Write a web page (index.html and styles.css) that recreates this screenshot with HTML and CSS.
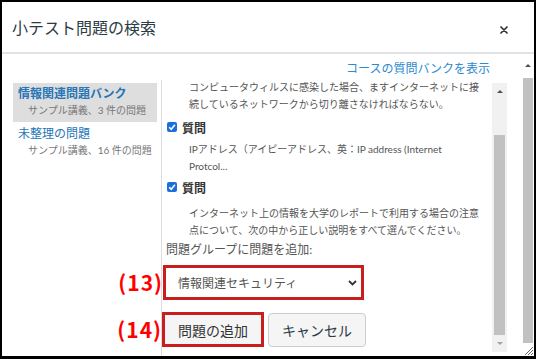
FILE: index.html
```html
<!DOCTYPE html>
<html lang="ja">
<head>
<meta charset="utf-8">
<title>小テスト問題の検索</title>
<link rel="stylesheet" href="styles.css">
</head>
<body>
<div class="frame">
  <div class="header">
    <div class="title">小テスト問題の検索</div>
    <svg class="close" width="8" height="8" viewBox="0 0 8 8"><path d="M1 1 L7 7 M7 1 L1 7" stroke="#333" stroke-width="1.7" stroke-linecap="round"/></svg>
  </div>
  <div class="body">
    <div class="content">
      <div class="linkrow">コースの質問バンクを表示</div>
      <div class="panes">
        <div class="sidebar">
          <div class="item sel">
            <div class="item-title">情報関連問題バンク</div>
            <div class="item-sub">サンプル講義、3 件の問題</div>
          </div>
          <div class="item second">
            <div class="item-title">未整理の問題</div>
            <div class="item-sub">サンプル講義、16 件の問題</div>
          </div>
        </div>
        <div class="main">
          <div class="desc d1">コンピュータウィルスに感染した場合、ますインターネットに接<br>続しているネットワークから切り離さなければならない。</div>
          <div class="q q1"><span class="cb"><svg width="10" height="10" viewBox="0 0 10 10"><path d="M2.2 5.2 L4.2 7.2 L7.9 2.8" fill="none" stroke="#fff" stroke-width="1.6"/></svg></span>質問</div>
          <div class="desc d2">IPアドレス（アイピーアドレス、英：IP address (Internet<br>Protcol...</div>
          <div class="q q2"><span class="cb"><svg width="10" height="10" viewBox="0 0 10 10"><path d="M2.2 5.2 L4.2 7.2 L7.9 2.8" fill="none" stroke="#fff" stroke-width="1.6"/></svg></span>質問</div>
          <div class="desc d3">インターネット上の情報を大学のレポートで利用する場合の注意<br>点について、次の中から正しい説明をすべて選んでください。</div>
          <div class="label">問題グループに問題を追加:</div>
          <div class="select">
            <span class="ann">(13)</span>
            <span>情報関連セキュリティ</span>
            <svg class="chev" width="9" height="6" viewBox="0 0 9 6"><path d="M1 1 L4.5 4.5 L8 1" fill="none" stroke="#333" stroke-width="1.8"/></svg>
          </div>
          <div class="btns">
            <div class="add"><span class="ann">(14)</span>問題の追加</div>
            <div class="cancel">キャンセル</div>
          </div>
        </div>
        <div class="iscroll">
          <div class="arrow"><span class="tri up"></span></div>
          <div class="ithumb"></div>
          <div class="arrow"><span class="tri down"></span></div>
        </div>
        <div class="gap"></div>
      </div>
    </div>
    <div class="oscroll">
      <div class="oarrow"><span class="tri up dark"></span></div>
      <div class="othumb"></div>
      <svg class="grip" width="10" height="9" viewBox="0 0 10 9"><path d="M2 9 L10 1 M5 9 L10 4 M8 9 L10 7" stroke="#666" stroke-width="1"/></svg>
    </div>
  </div>
</div>
</body>
</html>
```

FILE: styles.css
```css
* { box-sizing: border-box; margin: 0; padding: 0; }
body {
  width: 536px;
  height: 359px;
  overflow: hidden;
  background: #fff;
  font-family: Lato, "Noto Sans CJK JP", sans-serif;
}
.frame {
  width: 536px;
  height: 359px;
  border: 2px solid #000;
  border-bottom-width: 3px;
  display: flex;
  flex-direction: column;
}
.header {
  height: 52px;
  flex: none;
  border-bottom: 2px solid #e1e4e7;
  display: flex;
  align-items: center;
  justify-content: space-between;
  padding: 0 26px 0 10px;
}
.title {
  font-family: "Noto Sans CJK JP", sans-serif;
  font-size: 16px;
  color: #2d3b45;
}
.close { margin-top: 6px; }
.body { flex: 1; display: flex; min-height: 0; }
.content { flex: 1; display: flex; flex-direction: column; min-width: 0; }
.linkrow {
  height: 26px;
  flex: none;
  display: flex;
  align-items: center;
  justify-content: flex-end;
  padding-right: 32px;
  font-family: "Noto Sans CJK JP", sans-serif;
  font-size: 12px;
  color: #2b8ad0;
}
.panes { flex: 1; display: flex; min-height: 0; }
.sidebar {
  width: 160px;
  flex: none;
  border-right: 1px solid #dcdcdc;
  padding-top: 3px;
}
.item {
  margin-left: 11px;
  width: 144px;
  padding: 2px 0 4px 5px;
}
.item.second { padding-top: 3px; }
.item.sel { background: #dedede; }
.item-title {
  font-size: 12px;
  line-height: 17px;
  color: #2575b8;
}
.item.sel .item-title { font-weight: 700; }
.item-sub {
  font-size: 10px;
  line-height: 16px;
  color: #777;
  padding-left: 10px;
}
.main {
  flex: 1;
  min-width: 0;
  padding-left: 5px;
}
.desc {
  padding-left: 22px;
  font-size: 10px;
  line-height: 17px;
  color: #555;
  white-space: nowrap;
}
.d1 { margin-top: -1px; }
.d2 { margin-top: 4px; }
.d3 { margin-top: 8px; }
.q {
  display: flex;
  align-items: center;
  height: 20px;
  font-family: "Noto Sans CJK JP", sans-serif;
  font-size: 12px;
  font-weight: 700;
  color: #333;
}
.q1 { margin-top: 4px; }
.q2 { margin-top: 2px; }
.cb {
  width: 10px;
  height: 10px;
  background: #1a6fdc;
  border-radius: 2px;
  margin-right: 5px;
  display: flex;
}
.label {
  margin-top: 2px;
  margin-left: -1px;
  font-size: 12px;
  line-height: 18px;
  color: #555;
}
.select {
  position: relative;
  margin-top: 6px;
  margin-left: -4px;
  width: 201px;
  height: 35px;
  border: 3px solid #c81e1e;
  background: #fff;
  display: flex;
  align-items: center;
  justify-content: space-between;
  padding: 0 4px 0 12px;
  font-size: 12px;
  color: #555;
}
.ann {
  position: absolute;
  right: calc(100% + 3px);
  top: 50%;
  transform: translateY(-52%);
  font-family: "Noto Sans CJK JP", sans-serif;
  font-size: 21px;
  font-weight: 700;
  color: #ff0000;
  letter-spacing: 1px;
  white-space: nowrap;
  line-height: 1;
}
.btns {
  display: flex;
  gap: 4px;
  margin-top: 12px;
  margin-left: -5px;
}
.add {
  position: relative;
  width: 102px;
  height: 35px;
  border: 3px solid #c81e1e;
  background: #f5f5f5;
  display: flex;
  align-items: center;
  justify-content: center;
  font-size: 14px;
  color: #333;
}
.cancel {
  width: 98px;
  height: 34px;
  margin-top: 1px;
  border: 1px solid #c7cdd1;
  border-radius: 4px;
  background: #f5f5f5;
  display: flex;
  align-items: center;
  justify-content: center;
  font-size: 14px;
  color: #2d3b45;
}
.iscroll {
  width: 15px;
  flex: none;
  margin: 3px 0 4px;
  background: #f1f1f1;
  display: flex;
  flex-direction: column;
  align-items: center;
}
.arrow {
  height: 17px;
  width: 15px;
  display: flex;
  align-items: center;
  justify-content: center;
}
.ithumb {
  margin-top: 35px;
  width: 11px;
  height: 200px;
  background: #c1c1c1;
}
.gap { width: 15px; flex: none; }
.tri { width: 0; height: 0; border-left: 3px solid transparent; border-right: 3px solid transparent; }
.tri.up { border-bottom: 3px solid #505050; }
.tri.down { border-top: 3px solid #a3a3a3; }
.oscroll {
  width: 12px;
  flex: none;
  position: relative;
  display: flex;
  flex-direction: column;
  align-items: center;
}
.oarrow {
  height: 22px;
  width: 12px;
  display: flex;
  align-items: center;
  justify-content: center;
}
.othumb {
  margin-top: 2px;
  width: 10px;
  height: 265px;
  background: #c1c1c1;
}
.grip { margin-top: 3px; }
```
